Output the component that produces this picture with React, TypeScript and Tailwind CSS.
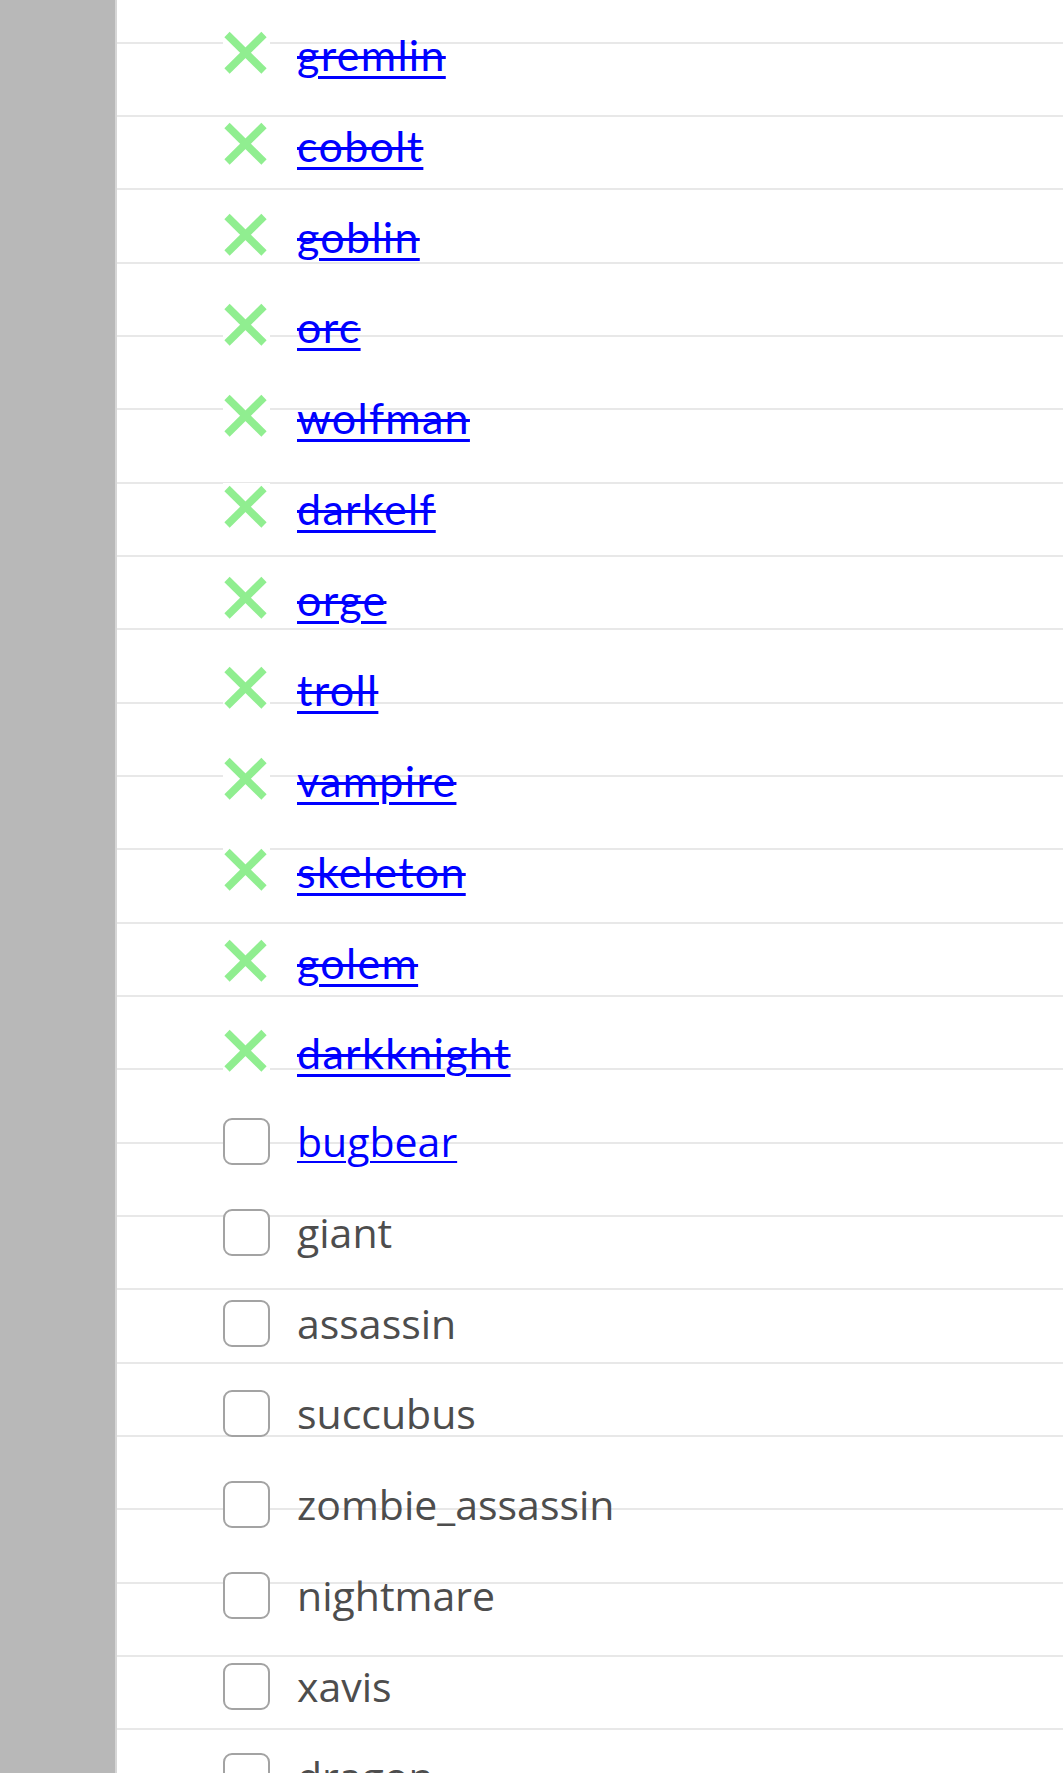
import React from 'react'

type Monster = {
  name: string
  done?: boolean
  link?: boolean
}

const monsters: Monster[] = [
  { name: 'gremlin', done: true },
  { name: 'cobolt', done: true },
  { name: 'goblin', done: true },
  { name: 'orc', done: true },
  { name: 'wolfman', done: true },
  { name: 'darkelf', done: true },
  { name: 'orge', done: true },
  { name: 'troll', done: true },
  { name: 'vampire', done: true },
  { name: 'skeleton', done: true },
  { name: 'golem', done: true },
  { name: 'darkknight', done: true },
  { name: 'bugbear', link: true },
  { name: 'giant' },
  { name: 'assassin' },
  { name: 'succubus' },
  { name: 'zombie_assassin' },
  { name: 'nightmare' },
  { name: 'xavis' },
  { name: 'dragon' },
]

function CrossMark() {
  return (
    <div className="w-[47px] h-[47px] shrink-0 bg-white">
      <svg width="47" height="47" viewBox="0 0 47 47">
        <line x1="4" y1="5.5" x2="41" y2="42" stroke="#90ee90" strokeWidth="7.5" />
        <line x1="41" y1="5.5" x2="4" y2="42" stroke="#90ee90" strokeWidth="7.5" />
      </svg>
    </div>
  )
}

function Box() {
  return <div className="w-[47px] h-[47px] shrink-0 bg-white border-2 border-[#a3a3a3] rounded-[9px]" />
}

function MonsterRow({ item }: { item: Monster }) {
  return (
    <li className="h-[90.75px] flex items-start">
      {item.done ? <CrossMark /> : <Box />}
      {item.done ? (
        <a
          href="#"
          className="ml-[27px] mt-[2px] text-[43px] leading-[47px] tracking-[1.3px] text-[#0000ff] [text-decoration-line:underline_line-through] decoration-[2.5px] underline-offset-[5px]"
          style={{ fontFamily: 'Lato, "Noto Sans", sans-serif' }}
        >
          {item.name}
        </a>
      ) : item.link ? (
        <a
          href="#"
          className="ml-[27px] text-[41px] leading-[47px] text-[#0000ff] underline decoration-2 underline-offset-[4px]"
          style={{ fontFamily: '"Open Sans", "Noto Sans", sans-serif' }}
        >
          {item.name}
        </a>
      ) : (
        <span
          className="ml-[27px] text-[41px] leading-[47px] text-[#4d4d4d]"
          style={{ fontFamily: '"Open Sans", "Noto Sans", sans-serif' }}
        >
          {item.name}
        </span>
      )}
    </li>
  )
}

export default function App() {
  return (
    <div className="flex h-[1773px] overflow-hidden bg-white">
      {/* side bar */}
      <aside className="w-[117px] shrink-0 bg-[#b8b8b8] border-r-2 border-[#d6d6d6]" />

      {/* list */}
      <main className="flex-1 bg-white bg-[image:repeating-linear-gradient(to_bottom,transparent_0,transparent_41.7px,#e8e8e8_41.7px,#e8e8e8_43.7px,transparent_43.7px,transparent_73.33px)]">
        <ul className="pl-[106px] pt-[29px]">
          {monsters.map((m) => (
            <MonsterRow key={m.name} item={m} />
          ))}
        </ul>
      </main>
    </div>
  )
}
